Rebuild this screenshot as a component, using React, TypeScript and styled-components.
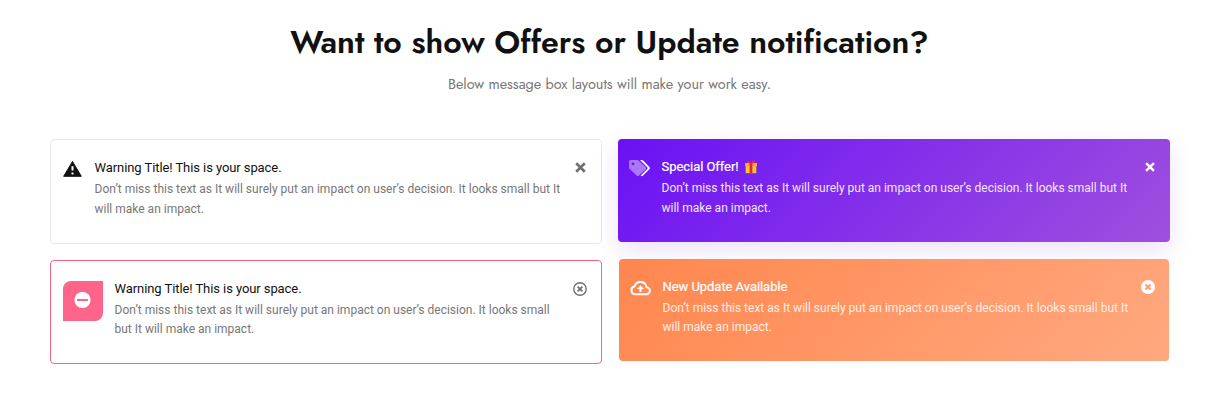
import React from 'react';
import styled, { createGlobalStyle, css } from 'styled-components';

const GlobalStyle = createGlobalStyle`
  * { box-sizing: border-box; }
  body { margin: 0; background: #fff; font-family: Roboto, sans-serif; }
`;

const Page = styled.main`
  height: 407px;
  padding: 22px 53px 0 50px;
  overflow: hidden;
`;

const Header = styled.header`
  padding-right: 1px;
  text-align: center;
  font-family: Jost, Lato, sans-serif;
`;

const Heading = styled.h1`
  margin: 0;
  font-size: 32px;
  line-height: 40px;
  font-weight: 600;
  color: #111;
  white-space: nowrap;
`;

const Subheading = styled.p`
  margin: 11px 0 0;
  font-size: 14.4px;
  line-height: 22px;
  color: #777;
  white-space: nowrap;
`;

const Columns = styled.section`
  display: flex;
  gap: 16px;
  margin-top: 44px;
`;

const Column = styled.div<{ $gap: number }>`
  width: 552px;
  display: flex;
  flex-direction: column;
  gap: ${p => p.$gap}px;
`;

type Variant = 'plain' | 'offer' | 'danger' | 'update';

const variants = {
  plain: css`
    height: 105px;
    padding: 18px 15px 0 12px;
    border: 1px solid #e9e9ea;
  `,
  offer: css`
    height: 103px;
    padding: 18px 15px 0 11px;
    background: linear-gradient(135deg, #6a11f5 0%, #9f50dd 100%);
    box-shadow: 0 8px 24px rgba(106, 17, 203, 0.13);
  `,
  danger: css`
    height: 104px;
    padding: 18px 14px 0 12px;
    border: 1px solid #f7658b;
  `,
  update: css`
    height: 102px;
    margin: 0 1px;
    padding: 18px 14px 0 11px;
    background: linear-gradient(135deg, #ff864e 0%, #ffa980 100%);
  `,
};

const Card = styled.article<{ $variant: Variant }>`
  position: relative;
  display: flex;
  align-items: flex-start;
  border-radius: 4px;
  ${p => variants[p.$variant]}
`;

const IconSlot = styled.span<{ $width: number; $color: string; $top?: number }>`
  display: flex;
  flex: none;
  width: ${p => p.$width}px;
  padding-top: ${p => p.$top ?? 0}px;
  color: ${p => p.$color};
`;

const IconTile = styled.span`
  display: flex;
  flex: none;
  align-items: flex-start;
  width: 40px;
  height: 40px;
  margin: 2px 11.5px 0 0;
  padding: 11px 0 0 11px;
  border-radius: 8px 0 8px 0;
  background: #ff658a;
  color: #fff;
`;

const Copy = styled.div`
  flex: 1;
  white-space: nowrap;
`;

const Title = styled.h2<{ $color: string }>`
  display: flex;
  align-items: center;
  margin: 0;
  font-size: 13px;
  line-height: 20px;
  font-weight: 400;
  letter-spacing: -0.08px;
  color: ${p => p.$color};
`;

const LightTitle = styled(Title)`
  -webkit-text-stroke: 0.2px currentColor;
  letter-spacing: -0.05px;
`;

const Body = styled.p<{ $color: string; $leading?: number; $gap?: number }>`
  margin: ${p => p.$gap ?? 1}px 0 0;
  font-size: 12px;
  line-height: ${p => p.$leading ?? 20}px;
  color: ${p => p.$color};
`;

const CloseButton = styled.button<{ $color: string; $top: number }>`
  display: flex;
  flex: none;
  margin: ${p => p.$top}px 0 0;
  padding: 0;
  border: 0;
  background: none;
  color: ${p => p.$color};
`;

const Warning = () => (
  <svg width="19" height="16" viewBox="0 0 19 16">
    <path
      d="M9.5.5 18.3 15.3H.7Z"
      fill="currentColor"
      stroke="currentColor"
      strokeWidth="1"
      strokeLinejoin="round"
    />
    <path d="M8.5 5.2H10.5V9.6H8.5ZM8.5 11.4H10.5V13.4H8.5Z" fill="#fff" />
  </svg>
);

const MinusCircle = () => (
  <svg width="17" height="17" viewBox="0 0 17 17">
    <circle cx="8.5" cy="8" r="8.1" fill="currentColor" />
    <path d="M3 7H14V9H3Z" fill="#ff658a" />
  </svg>
);

const CloudUpload = () => (
  <svg width="21" height="15" viewBox="0 0 21 15" fill="none" stroke="currentColor" strokeWidth="1.9">
    <path d="M5 13.2H16.4A3.4 3.4 0 0 0 16.6 6.4A6.2 6.2 0 0 0 4.5 5.5A3.9 3.9 0 0 0 5 13.2Z" strokeLinejoin="round" />
    <path d="M10.5 11V7" strokeWidth="2.1" />
    <path d="M6.9 8 10.5 4.2 14.1 8Z" fill="currentColor" stroke="none" />
  </svg>
);

const Cross = ({ size }: { size: number }) => (
  <svg width={size} height={size} viewBox="0 0 11 11" fill="none" stroke="currentColor" strokeWidth="2.7">
    <path d="M1.2 1.2 9.8 9.8M9.8 1.2 1.2 9.8" />
  </svg>
);

const CrossOutline = () => (
  <svg width="14" height="14" viewBox="0 0 14 14" fill="none" stroke="currentColor">
    <circle cx="7" cy="7" r="6.2" strokeWidth="1.4" />
    <path d="M4.6 4.6 9.4 9.4M9.4 4.6 4.6 9.4" strokeWidth="1.8" />
  </svg>
);

const CrossSolid = () => (
  <svg width="14" height="14" viewBox="0 0 14 14" fill="none">
    <circle cx="7" cy="7" r="7" fill="#fff" />
    <path d="M4.4 4.4 9.6 9.6M9.6 4.4 4.4 9.6" stroke="#ff9f73" strokeWidth="2.1" />
  </svg>
);

const Tags = () => (
  <svg width="21" height="17" viewBox="0 0 21 17">
    <path
      d="M1.5 0H8.1Q8.9 0 9.5.6L16.6 7.1Q17.8 8.3 16.6 9.5L10 15.6Q8.8 16.8 7.6 15.6L.6 8.8Q0 8.2 0 7.4V1.5Q0 0 1.5 0ZM4 2.4A1.4 1.4 0 1 0 4 5.2A1.4 1.4 0 1 0 4 2.4Z"
      fill="#fff"
      fillOpacity=".42"
      fillRule="evenodd"
    />
    <path d="M11 0H12.8Q13.5 0 14.1.6L20.4 7Q21.4 8.1 20.4 9.3L14.1 15.6Q13.1 16.6 12 15.8L11.8 15.5 18 9.3Q19 8.1 18 7Z" fill="#fff" />
  </svg>
);

const GiftSvg = styled.svg`
  margin-left: 6px;
`;

const Gift = () => (
  <GiftSvg width="12" height="14" viewBox="0 0 12 14">
    <path d="M.7 5.5H11.3V13.2H.7Z" fill="#fbc630" />
    <path d="M0 3H12V6.2H0Z" fill="#f9a72b" />
    <path d="M4.6 3H7.4V13.2H4.6Z" fill="#e5243f" />
    <path d="M6 3.3C4.5 3.5 1.3 3.2 1.8 1.4 2.3-.3 5 .7 6 3.3 7-.3 9.7-.3 10.2 1.4 10.7 3.2 7.5 3.5 6 3.3Z" fill="#e5243f" />
  </GiftSvg>
);

const FIRST = 'Don’t miss this text as It will surely put an impact on user’s decision. It looks small';

export default function App() {
  return (
    <>
      <GlobalStyle />
      <Page>
        <Header>
          <Heading>Want to show Offers or Update notification?</Heading>
          <Subheading>Below message box layouts will make your work easy.</Subheading>
        </Header>
        <Columns>
          <Column $gap={16}>
            <Card $variant="plain">
              <IconSlot $width={31.5} $top={3} $color="#111"><Warning /></IconSlot>
              <Copy>
                <Title $color="#111">Warning Title! This is your space.</Title>
                <Body $color="#777">{FIRST} but It<br />will make an impact.</Body>
              </Copy>
              <CloseButton $color="#707070" $top={4} aria-label="Dismiss"><Cross size={11} /></CloseButton>
            </Card>
            <Card $variant="danger">
              <IconTile><MinusCircle /></IconTile>
              <Copy>
                <Title $color="#111">Warning Title! This is your space.</Title>
                <Body $color="#777" $leading={19} $gap={2}>{FIRST}<br />but It will make an impact.</Body>
              </Copy>
              <CloseButton $color="#6d7075" $top={3} aria-label="Dismiss"><CrossOutline /></CloseButton>
            </Card>
          </Column>
          <Column $gap={17}>
            <Card $variant="offer">
              <IconSlot $width={32.5} $top={3} $color="#fff"><Tags /></IconSlot>
              <Copy>
                <LightTitle $color="#fff">Special Offer!<Gift /></LightTitle>
                <Body $color="#f1e7fd">{FIRST} but It<br />will make an impact.</Body>
              </Copy>
              <CloseButton $color="#fff" $top={5} aria-label="Dismiss"><Cross size={10} /></CloseButton>
            </Card>
            <Card $variant="update">
              <IconSlot $width={32.5} $top={4} $color="#fff"><CloudUpload /></IconSlot>
              <Copy>
                <LightTitle $color="#fff">New Update Available</LightTitle>
                <Body $color="#ffeee5" $leading={19} $gap={2}>{FIRST} but It<br />will make an impact.</Body>
              </Copy>
              <CloseButton $color="#fff" $top={3} aria-label="Dismiss"><CrossSolid /></CloseButton>
            </Card>
          </Column>
        </Columns>
      </Page>
    </>
  );
}
